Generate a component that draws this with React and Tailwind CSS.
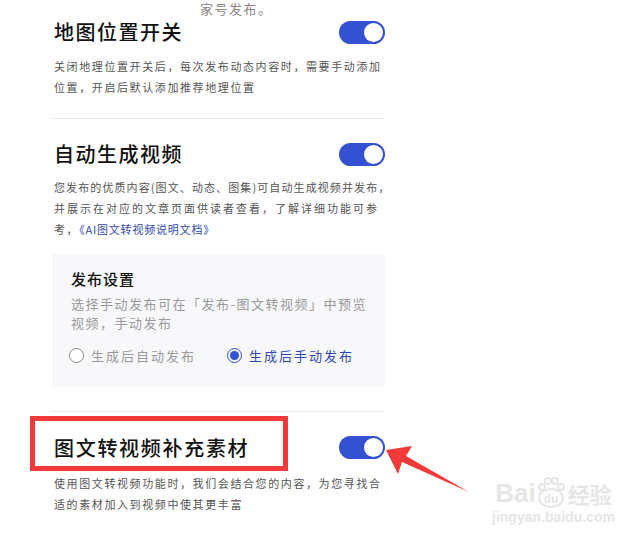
import React from 'react';

const font = { fontFamily: '"Noto Sans CJK SC", "Noto Sans", sans-serif' };

const Toggle = () => (
  <div className="w-[46px] h-[23px] rounded-full bg-[#3451d1] flex items-center justify-end pr-[2px]">
    <div className="w-[19px] h-[19px] rounded-full bg-white" />
  </div>
);

const Desc = ({ children, className = 'tracking-[1.6px]' }) => (
  <p className={`whitespace-nowrap text-[11px] leading-[21px] text-[#555] ${className}`}>{children}</p>
);

export default function App() {
  return (
    <div className="relative w-[644px] h-[548px] bg-white overflow-hidden" style={font}>
      <div className="ml-[52px] w-[333px] flex flex-col">
        <p className="h-[20px] pl-[148px] text-[13px] leading-[20px] tracking-[1.5px] text-[#888] -mt-[1px]">家号发布。</p>

        {/* 地图位置开关 */}
        <div className="flex items-center justify-between h-[24px] mt-[1px]">
          <h2 className="pl-[2px] text-[20px] leading-[24px] tracking-[1.5px] text-[#111] font-medium">地图位置开关</h2>
          <Toggle />
        </div>
        <div className="pl-[2px] mt-[12px]">
          <Desc>关闭地理位置开关后，每次发布动态内容时，需要手动添加</Desc>
          <Desc>位置，开启后默认添加推荐地理位置</Desc>
        </div>
        <div className="mt-[20px] h-px bg-[#ececec]" />

        {/* 自动生成视频 */}
        <div className="flex items-center justify-between h-[24px] mt-[23px]">
          <h2 className="pl-[2px] text-[20px] leading-[24px] tracking-[1.5px] text-[#111] font-medium">自动生成视频</h2>
          <Toggle />
        </div>
        <div className="pl-[2px] mt-[11px]">
          <Desc className="tracking-[1.1px]">您发布的优质内容(图文、动态、图集)可自动生成视频并发布，</Desc>
          <Desc className="tracking-[2px]">并展示在对应的文章页面供读者查看，了解详细功能可参</Desc>
          <Desc className="tracking-[1.6px]">
            考，<span className="text-[#2f48b5] tracking-[0.8px]">《AI图文转视频说明文档》</span>
          </Desc>
        </div>

        <div className="mt-[14px] h-[133px] bg-[#f8f8fa] pl-[19px] pr-[14px] pt-[15px]">
          <h3 className="text-[15px] leading-[20px] tracking-[1px] text-[#111] font-medium">发布设置</h3>
          <p className="mt-[5px] whitespace-nowrap text-[13px] leading-[19px] tracking-[1.5px] text-[#9a9a9a]">
            选择手动发布可在「发布-图文转视频」中预览
          </p>
          <p className="whitespace-nowrap text-[13px] leading-[19px] tracking-[1.5px] text-[#9a9a9a]">视频，手动发布</p>
          <div className="mt-[14px] -ml-[2px] flex items-center text-[13px] leading-[19px] tracking-[2px]">
            <div className="flex items-center gap-[7px] text-[#9a9a9a]">
              <span className="w-[15px] h-[15px] rounded-full border border-[#888] bg-white" />
              <span>生成后自动发布</span>
            </div>
            <div className="ml-[31px] flex items-center gap-[7px] text-[#2f48b5]">
              <span className="w-[15px] h-[15px] rounded-full border-[1.5px] border-[#3451d1] flex items-center justify-center">
                <span className="w-[9px] h-[9px] rounded-full bg-[#3451d1]" />
              </span>
              <span>生成后手动发布</span>
            </div>
          </div>
        </div>
        <div className="mt-[24px] h-px bg-[#ececec]" />

        {/* 图文转视频补充素材 */}
        <div className="flex items-center justify-between h-[23px] mt-[24px]">
          <h2 className="pl-[2px] text-[20px] leading-[24px] tracking-[1.7px] text-[#111] font-medium">图文转视频补充素材</h2>
          <Toggle />
        </div>
        <div className="pl-[2px] mt-[14px]">
          <Desc>使用图文转视频功能时，我们会结合您的内容，为您寻找合</Desc>
          <Desc>适的素材加入到视频中使其更丰富</Desc>
        </div>
      </div>

      {/* annotation box */}
      <div className="absolute left-[30px] top-[416px] w-[258px] h-[55px] border-[5px] border-[#f33a3a]" />

      {/* annotation arrow */}
      <svg className="absolute left-[380px] top-[440px]" width="100" height="60" viewBox="0 0 100 60">
        <polygon points="6,10 32,6 26,16 89,52 22,22 18,34" fill="#f33a3a" />
      </svg>

      {/* watermark */}
      <div className="absolute left-[492px] top-[476px] flex flex-col items-center text-[#e6e6e6]" style={{ fontFamily: '"Liberation Sans", sans-serif' }}>
        <div className="flex items-end">
          <span className="text-[26px] font-bold leading-[30px]">Bai</span>
          <svg width="30" height="32" viewBox="0 0 30 32">
            <ellipse cx="15" cy="22" rx="12" ry="9" fill="none" stroke="#e6e6e6" strokeWidth="2" />
            <circle cx="6" cy="11" r="3" fill="none" stroke="#e6e6e6" strokeWidth="2" />
            <circle cx="12" cy="5" r="3" fill="none" stroke="#e6e6e6" strokeWidth="2" />
            <circle cx="19" cy="5" r="3" fill="none" stroke="#e6e6e6" strokeWidth="2" />
            <circle cx="25" cy="11" r="3" fill="none" stroke="#e6e6e6" strokeWidth="2" />
            <text x="15" y="27" textAnchor="middle" fontSize="12" fontWeight="bold" fill="#e6e6e6">du</text>
          </svg>
          <span className="text-[22px] font-bold leading-[30px] ml-[2px]" style={font}>经验</span>
        </div>
        <span className="text-[14px] leading-[18px] font-bold">jingyan.baidu.com</span>
      </div>
    </div>
  );
}
